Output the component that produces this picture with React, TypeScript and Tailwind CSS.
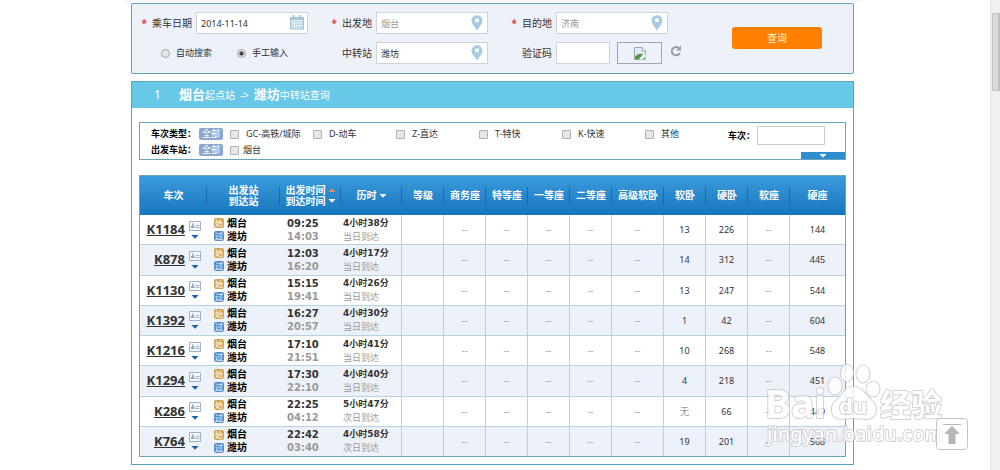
const fontCls = "font-['Noto_Sans','Noto_Sans_CJK_SC',sans-serif]";
const wideFontCls = "font-['DejaVu_Sans','Noto_Sans_CJK_SC',sans-serif]";

const inputCls =
  "block h-[22px] w-full border border-[#cfd3d8] bg-white px-1 text-[9px] outline-none focus:border-[#4a9cc0]";

type Train = {
  code: string;
  depart: string;
  arrive: string;
  duration: string;
  day: string;
  seats: string[];
};

const NONE = ["--", "--", "--", "--", "--"];

const TRAINS: Train[] = [
  { code: "K1184", depart: "09:25", arrive: "14:03", duration: "4小时38分", day: "当日到达", seats: [...NONE, "13", "226", "--", "144"] },
  { code: "K878", depart: "12:03", arrive: "16:20", duration: "4小时17分", day: "当日到达", seats: [...NONE, "14", "312", "--", "445"] },
  { code: "K1130", depart: "15:15", arrive: "19:41", duration: "4小时26分", day: "当日到达", seats: [...NONE, "13", "247", "--", "544"] },
  { code: "K1392", depart: "16:27", arrive: "20:57", duration: "4小时30分", day: "当日到达", seats: [...NONE, "1", "42", "--", "604"] },
  { code: "K1216", depart: "17:10", arrive: "21:51", duration: "4小时41分", day: "当日到达", seats: [...NONE, "10", "268", "--", "548"] },
  { code: "K1294", depart: "17:30", arrive: "22:10", duration: "4小时40分", day: "当日到达", seats: [...NONE, "4", "218", "--", "451"] },
  { code: "K286", depart: "22:25", arrive: "04:12", duration: "5小时47分", day: "次日到达", seats: [...NONE, "无", "66", "--", "449"] },
  { code: "K764", depart: "22:42", arrive: "03:40", duration: "4小时58分", day: "次日到达", seats: [...NONE, "19", "201", "--", "568"] },
];

const SEAT_HEADS = ["等级", "商务座", "特等座", "一等座", "二等座", "高级软卧", "软卧", "硬卧", "软座", "硬座"];

const COL_WIDTHS = [
  "w-[67px]", "w-[73px]", "w-[61px]", "w-[61px]",
  "w-[42px]", "w-[42px]", "w-[42px]", "w-[42px]", "w-[42px]",
  "w-[52px]", "w-[42px]", "w-[42px]", "w-[42px]", "w-auto",
];

const TYPES = ["GC-高铁/城际", "D-动车", "Z-直达", "T-特快", "K-快速", "其他"];

function PinIcon() {
  return (
    <svg viewBox="0 0 12 16" className="absolute top-[3px] right-[5px] h-4 w-3">
      <path
        d="M6 0.3C2.8 0.3.5 2.7.5 5.8.5 9.200 4 12 6 15.700 8 12 11.500 9.200 11.500 5.800 11.500 2.700 9.200.3 6 .3Z"
        fill="#a9cbe2"
      />
      <circle cx="6" cy="5.300" r="2" fill="#fff" />
    </svg>
  );
}

function CalendarIcon() {
  return (
    <svg viewBox="0 0 16 15" className="absolute top-[3px] right-[3px] h-[15px] w-4">
      <path d="M1 2h14v12.500H1z" fill="#a3c5da" />
      <path d="M3.500 0h2v3h-2zM10.500 0h2v3h-2z" fill="#a3c5da" />
      <path d="M2.500 5h11v8.300h-11z" fill="#eef5f9" />
      <path
        d="M3.500 6h1.500v1.500H3.500zM6 6h1.500v1.500H6zM8.500 6H10v1.500H8.500zM11 6h1.500v1.500H11zM3.500 8.500h1.500V10H3.500zM6 8.500h1.500V10H6zM8.500 8.500H10V10H8.500zM11 8.500h1.500V10H11zM3.500 11h1.500v1.500H3.500zM6 11h1.500v1.500H6zM8.500 11H10v1.500H8.500zM11 11h1.500v1.500H11z"
        fill="#a3c5da"
      />
    </svg>
  );
}

function BrokenImageIcon() {
  return (
    <svg viewBox="0 0 12 13" className="h-[13px] w-3">
      <path d="M.5.5h7.500L11.500 4v8.500H.5z" fill="#e3ecf8" stroke="#9aa3ad" />
      <path d="M8 .5V4h3.500" fill="#fff" stroke="#9aa3ad" />
      <path d="M1 10c1.500-3 5-4 8-3L5 12H1z" fill="#4d9a3c" />
      <path d="M11.500 6.500 6 12.500h5.500z" fill="#fff" />
      <path d="M8.500 12.500l2.500-2.500v2.500z" fill="#4d9a3c" />
    </svg>
  );
}

function RefreshIcon() {
  return (
    <svg viewBox="0 0 12 12" className="h-3 w-3">
      <path d="M8.800 3A4.200 4.200 0 1 0 9.800 8" fill="none" stroke="currentColor" strokeWidth="2" />
      <path d="M11 .5v5H6z" fill="currentColor" />
    </svg>
  );
}

function CardIcon() {
  return (
    <svg viewBox="0 0 12 10" className="h-2.5 w-3">
      <path d="M.5.5h11v9H.5z" fill="#f3f7fb" stroke="#9fb2c6" />
      <path d="M3 2.500h1.500v2.500H5.500v2H2V5h1z" fill="#93a5ba" />
      <path d="M6.500 4.500h4M6.500 6.500h4" stroke="#93a5ba" strokeWidth=".8" />
    </svg>
  );
}

function Triangle({ up, className }: { up?: boolean; className: string }) {
  return (
    <svg viewBox="0 0 8 4" className={`h-1 w-2 ${className}`}>
      <path d={up ? "M.5 4h7L4 .3Z" : "M.5 0h7L4 3.700Z"} fill="currentColor" />
    </svg>
  );
}

function Field({
  id,
  label,
  required,
  children,
}: {
  id: string;
  label: string;
  required?: boolean;
  children: React.ReactNode;
}) {
  return (
    <div className="flex h-[22px] w-[167px] items-center">
      <label htmlFor={id} className="w-[55px] shrink-0 pr-1 text-right text-[10px] whitespace-nowrap">
        {required && <span className="mr-[5px] font-bold text-[#d9434e]">*</span>}
        {label}
      </label>
      {children}
    </div>
  );
}

function Radio({ label, checked }: { label: string; checked?: boolean }) {
  return (
    <label className="flex items-center gap-1.5 text-[9px]">
      <input
        type="radio"
        name="mode"
        defaultChecked={checked}
        className="size-[9px] appearance-none rounded-full border border-[#a5a5a5] bg-[#e6e6e6] checked:bg-[radial-gradient(circle,#444_35%,#e6e6e6_50%)]"
      />
      {label}
    </label>
  );
}

function Check({ label, gap }: { label: string; gap: string }) {
  return (
    <label className={`flex w-[83px] shrink-0 items-center whitespace-nowrap ${gap}`}>
      <input
        type="checkbox"
        className="size-[9px] shrink-0 appearance-none rounded-[1px] border border-[#b0b0b0] bg-[#e6e6e6] checked:bg-[#2d8fce]"
      />
      {label}
    </label>
  );
}

function AllButton() {
  return (
    <button type="button" className="mr-[7px] h-3 w-6 shrink-0 rounded-xs bg-[#8ea6cf] text-[9px] leading-3 text-white">
      全部
    </button>
  );
}

function SearchForm() {
  return (
    <form
      onSubmit={(e) => e.preventDefault()}
      className="flex items-center rounded-xs border border-[#5f9fbc] bg-[#edf1f9] pt-2 pr-[31px] pb-[9px] pl-[9px]"
    >
      <div className="grid grid-cols-[repeat(3,167px)] gap-x-[13px] gap-y-2">
        <Field id="date" label="乘车日期" required>
          <div className="relative flex-1">
            <input id="date" defaultValue="2014-11-14" className={inputCls} />
            <CalendarIcon />
          </div>
        </Field>
        <Field id="from" label="出发地" required>
          <div className="relative flex-1">
            <input id="from" defaultValue="烟台" className={`${inputCls} text-[#999]`} />
            <PinIcon />
          </div>
        </Field>
        <Field id="to" label="目的地" required>
          <div className="relative flex-1">
            <input id="to" defaultValue="济南" className={`${inputCls} text-[#999]`} />
            <PinIcon />
          </div>
        </Field>
        <div className="flex items-center gap-[25px] pl-5">
          <Radio label="自动搜索" />
          <Radio label="手工输入" checked />
        </div>
        <Field id="via" label="中转站">
          <div className="relative flex-1">
            <input id="via" defaultValue="潍坊" className={inputCls} />
            <PinIcon />
          </div>
        </Field>
        <Field id="captcha" label="验证码">
          <div className="w-[54px] shrink-0">
            <input id="captcha" className={inputCls} />
          </div>
          <div className="ml-[7px] flex h-[22px] w-[45px] shrink-0 items-center justify-center border border-[#a3a6ac]">
            <BrokenImageIcon />
          </div>
          <button type="button" aria-label="刷新" className="ml-2 shrink-0 pb-1 text-[#9a9ca3]">
            <RefreshIcon />
          </button>
        </Field>
      </div>
      <button
        type="submit"
        className="ml-auto h-[22px] w-[90px] rounded-[3px] bg-[#ff8000] text-[10px] text-[#fff3df]"
      >
        查询
      </button>
    </form>
  );
}

function Filters() {
  return (
    <div className="relative flex border border-[#6aa3bd] pt-[3px] pr-5 pb-px pl-[11px] text-[9px]">
      <div className="flex-1">
        <div className="flex h-4 items-center">
          <b className="w-12 shrink-0 text-black">车次类型：</b>
          <AllButton />
          {TYPES.map((t) => (
            <Check key={t} label={t} gap="gap-[7px]" />
          ))}
        </div>
        <div className="flex h-4 items-center">
          <b className="w-12 shrink-0 text-black">出发车站：</b>
          <AllButton />
          <Check label="烟台" gap="gap-1" />
        </div>
      </div>
      <div className="flex h-[19px] shrink-0 items-center">
        <label htmlFor="code" className="w-[29px] font-bold whitespace-nowrap text-black">
          车次：
        </label>
        <input id="code" className="h-[19px] w-[68px] border border-[#ccc] bg-white px-1 outline-none" />
      </div>
      <button
        type="button"
        aria-label="展开"
        className="absolute right-0 bottom-0 flex h-[7px] w-11 items-center justify-center bg-[#2d8fce] text-white"
      >
        <Triangle className="" />
      </button>
    </div>
  );
}

function Stop({ mark, name, color }: { mark: string; name: string; color: string }) {
  return (
    <div className="flex items-center gap-[3px]">
      <span className={`flex size-2.5 items-center justify-center rounded-xs text-[8px] leading-none text-white ${color}`}>
        {mark}
      </span>
      <b className="text-[10px] text-black">{name}</b>
    </div>
  );
}

function TrainTable() {
  const sep = "relative after:absolute after:top-1/2 after:right-0 after:h-[18px] after:-translate-y-1/2 after:border-r after:border-[#1a6cae] last:after:hidden";
  return (
    <table className="h-[282px] w-full table-fixed border-separate border-spacing-0 border border-[#6aa3bd] text-[10px]">
      <colgroup>
        {COL_WIDTHS.map((w, i) => (
          <col key={i} className={w} />
        ))}
      </colgroup>
      <thead className="bg-linear-to-b from-[#3a9bdc] to-[#1676bd] text-white">
        <tr className="h-[39px] leading-[11px]">
          <th className={sep}>车次</th>
          <th className={sep}>出发站<br />到达站</th>
          <th className={sep}>
            <span className="flex items-center justify-center gap-0.5">出发时间<Triangle up className="text-[#f08a55]" /></span>
            <span className="flex items-center justify-center gap-0.5">到达时间<Triangle className="" /></span>
          </th>
          <th className={sep}>
            <span className="flex items-center justify-center gap-0.5">历时<Triangle className="" /></span>
          </th>
          {SEAT_HEADS.map((h) => (
            <th key={h} className={`${sep} whitespace-nowrap`}>{h}</th>
          ))}
        </tr>
      </thead>
      <tbody className="[&_td]:border-[#b5d3e0] [&_tr:not(:last-child)_td]:border-b">
        {TRAINS.map((t) => (
          <tr key={t.code} className="leading-[13px] even:bg-[#edf1f9]">
            <td>
              <div className="flex items-center justify-end gap-1 pr-1.5">
                <a href={`#${t.code}`} className="text-[13px] font-bold text-[#333] underline">
                  {t.code}
                </a>
                <span className="flex flex-col items-center gap-1 text-[#1560b3]">
                  <CardIcon />
                  <Triangle className="" />
                </span>
              </div>
            </td>
            <td className="pl-[7px]">
              <Stop mark="始" name="烟台" color="bg-[#cfa455]" />
              <Stop mark="过" name="潍坊" color="bg-[#5b8fcb]" />
            </td>
            <td className={`pl-[7px] font-bold ${wideFontCls}`}>
              <div>{t.depart}</div>
              <div className="text-[#999]">{t.arrive}</div>
            </td>
            <td className="border-r pl-0.5 text-[9px] whitespace-nowrap">
              <div className={`font-bold ${wideFontCls}`}>{t.duration}</div>
              <div className="text-[#999]">{t.day}</div>
            </td>
            <td className="border-r" />
            {t.seats.map((s, i) => (
              <td
                key={i}
                className={`border-r text-center text-[9px] last:border-r-0 ${s === "--" || s === "无" ? "text-[#999]" : ""}`}
              >
                {s}
              </td>
            ))}
          </tr>
        ))}
      </tbody>
    </table>
  );
}

function Watermark() {
  return (
    <svg
      viewBox="0 0 190 92"
      className={`pointer-events-none fixed right-[50px] bottom-[18px] h-[92px] w-[190px] opacity-80 ${fontCls}`}
      fill="#fff"
      stroke="#c8c8c8"
      strokeWidth="2"
      strokeLinejoin="round"
      paintOrder="stroke"
    >
      <g fontWeight="700">
        <text x="5" y="58" fontSize="39">Bai</text>
        <text x="120" y="56" fontSize="31">经验</text>
      </g>
      <ellipse cx="75" cy="26" rx="6.500" ry="8.500" />
      <ellipse cx="87" cy="13" rx="6" ry="8.500" />
      <ellipse cx="103" cy="14" rx="6.500" ry="8.500" />
      <ellipse cx="113" cy="29" rx="6.500" ry="7.500" />
      <path d="M93 27c-9 0-10 8-16 13-8 6-7 19 5 19 5 0 7-1 12-1s8 1 12 1c11 0 13-12 5-19-6-5-8-13-18-13Z" />
      <text x="79" y="54" fontSize="22" fontWeight="700">du</text>
      <text x="7" y="81" fontSize="20" fontWeight="500">jingyan.baidu.com</text>
    </svg>
  );
}

export default function App() {
  return (
    <div className={`flex h-screen overflow-hidden bg-white text-[#333] ${fontCls}`}>
      <main className="min-w-0 flex-1 pr-[5px]">
        <div className="mx-auto max-w-[739px] bg-[#f7f7f7] pt-0.5" />
        <div className="mx-auto mt-px max-w-[723px]">
          <SearchForm />
          <section className="mt-[7px] border border-[#5f9fbc]">
            <h2 className="flex h-[26px] items-center bg-[#67c8e8] pl-[22px] text-[10px] text-white">
              <span className="mr-[18px] text-xs">1</span>
              <b className="text-[13px]">烟台</b>起点站
              <span className="mx-[5px]">-&gt;</span>
              <b className="text-[13px]">潍坊</b>中转站查询
            </h2>
            <div className="space-y-[15px] px-[7px] pt-3.5 pb-[7px]">
              <Filters />
              <TrainTable />
            </div>
          </section>
        </div>
      </main>
      <aside className="w-2.5 shrink-0 border-l border-[#e4e4e4] bg-[#f1f1f1] pt-[13px] pl-px">
        <div className="h-[78px] border border-r-2 border-[#c2c2c2] bg-[#dadada]" />
      </aside>
      <Watermark />
      <button
        type="button"
        aria-label="返回顶部"
        className="fixed right-8 bottom-5 flex size-8 items-center justify-center rounded-sm border border-[#c4c4c4] bg-white/60"
      >
        <svg viewBox="0 0 20 20" className="size-5" fill="#b5b5b5">
          <path d="M1 0h18v1H1zM10 2l8 8h-4.500v10h-7V10H2z" />
        </svg>
      </button>
    </div>
  );
}
